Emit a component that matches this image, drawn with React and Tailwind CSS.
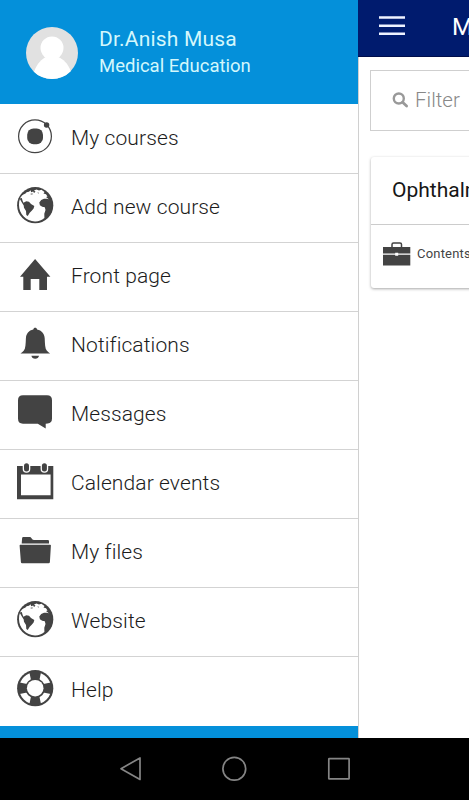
import React from 'react';

const DARK = '#434343';

function Icon({ children }) {
  return (
    <svg width="40" height="40" viewBox="0 0 40 40" fill={DARK} className="block shrink-0">
      {children}
    </svg>
  );
}

const PlanetIcon = () => (
  <Icon>
    <circle cx="20" cy="20.3" r="16.4" fill="none" stroke={DARK} strokeWidth="1.2" />
    <rect x="12.2" y="12.4" width="15.8" height="15.8" rx="6.3" />
    <circle cx="31.6" cy="9" r="2.7" />
  </Icon>
);

const GlobeIcon = () => (
  <Icon>
    <circle cx="20.2" cy="19.2" r="18.1" />
    <path
      fill="#fff"
      d="M4.2 15.5 L5.2 12 L7 9.6 L8.4 8.4 L10.5 7.6 L11.6 6.2 L14 5.8 L15.5 4.3 L16.2 6.2 L18.2 5.4 L19 7 L20.5 5.7 L19 4.5 L21.5 3.6 L24 4.6 L26.400 3.800 L29.500 6 L28.500 7.600 L31 8.200 L32.500 10.400 L31 11 L33.800 13.200 L31.500 12.800 L29 12.800 L26.200 14 L24.300 16.400 L24.900 19.300 L27.200 20.800 L29.800 21.200 L30.500 24 L29.300 27.800 L29.400 32 C26.600 34.400 23.500 35.500 20 35.400 C15.800 35.300 11.300 33.500 8.700 30.600 C5.600 27.500 4 23.200 4 19 Z"
    />
    <path d="M8.400 16.700 L11.300 15.200 L14 15.700 L16 18 L19.300 20.100 L18.600 22.400 L16.700 24.800 L14.700 26.800 L12.700 30 L11.300 29 L11 25 L9 21.700 L8.700 19.500 L6.400 15.800 L4.600 12.600 L6.800 12 L7.500 14.500Z" />
    <path d="M15 8.100l2-.6 1.300.6-1.600.4zM22.500 6.300l1.600.6-1 .7z" />
  </Icon>
);

const HomeIcon = () => (
  <Icon>
    <path d="M20.1 4 L35.4 21.8 H32 V35 H24.3 V24 H15.7 V35 H8.3 V21.8 H5 Z" />
  </Icon>
);

const BellIcon = () => (
  <Icon>
    <path d="M20.2 3.7c1 0 1.7.7 1.9 1.7 4.5.9 7.300 4.100 7.600 8.800.3 6 .2 10.100 2.200 12.600 1 1.200 2.100 2.100 3.200 2.800H5.500c1.100-.7 2.200-1.600 3.200-2.800 2-2.500 1.900-6.600 2.200-12.600.3-4.700 2.900-7.900 7.400-8.800.2-1 .9-1.700 1.900-1.700Z" />
    <path d="M16.400 31.700h7.600c-.3 1.800-1.800 3-3.800 3s-3.500-1.200-3.800-3Z" />
  </Icon>
);

const BubbleIcon = () => (
  <Icon>
    <path d="M8 2.200H32q5 0 5 5V25.500q0 4.600-4.300 5.100l-2 .2v4.700l-7.900-4.700H8q-5 0-5-5.200V7.200q0-5 5-5Z" />
  </Icon>
);

const CalendarIcon = () => (
  <Icon>
    <path fillRule="evenodd" d="M2 4H38.300V37.200H2ZM6 12.400V33.200H35.600V12.400Z" />
    <rect x="7.700" y="0" width="7.600" height="10.800" rx="3.800" fill="#fff" />
    <rect x="25.600" y="0" width="7.600" height="10.800" rx="3.800" fill="#fff" />
    <rect x="9" y="1.200" width="5" height="8.400" rx="2.500" />
    <rect x="26.900" y="1.200" width="5" height="8.400" rx="2.500" />
  </Icon>
);

const FolderIcon = () => (
  <Icon>
    <path d="M6.700 12.400 L7.100 7.200 Q7.200 6.100 8.300 6.100 H14.800 Q15.800 6.100 16.500 7.200 Q17.300 8.800 18.800 8.900 H32.800 Q34 9 34 10 V12.400Z" />
    <path d="M5.300 13.700H35.100Q36 13.700 35.900 14.600L34.900 31Q34.800 32.200 33.600 32.200H7.100Q6 32.200 5.900 31L4.600 14.600Q4.600 13.700 5.300 13.700Z" />
  </Icon>
);

const HelpIcon = () => (
  <Icon>
    <circle cx="20.200" cy="19.200" r="18.100" />
    <circle cx="20.200" cy="19.200" r="13" fill="none" stroke="#fff" strokeWidth="6" />
    <path d="M14.200 2.500H26.200L24.400 11H16ZM14.200 35.900H26.200L24.400 27.400H16ZM3.500 13.200V25.200L12 23.400V15ZM36.900 13.200V25.200L28.400 23.400V15Z" />
    <circle cx="20.200" cy="19.200" r="8.300" fill="#fff" />
  </Icon>
);

const items = [
  { label: 'My courses', icon: PlanetIcon },
  { label: 'Add new course', icon: GlobeIcon },
  { label: 'Front page', icon: HomeIcon },
  { label: 'Notifications', icon: BellIcon },
  { label: 'Messages', icon: BubbleIcon },
  { label: 'Calendar events', icon: CalendarIcon },
  { label: 'My files', icon: FolderIcon },
  { label: 'Website', icon: GlobeIcon },
  { label: 'Help', icon: HelpIcon },
];

function Drawer() {
  return (
    <aside className="flex w-[358px] shrink-0 flex-col bg-white">
      <header className="flex h-[104px] shrink-0 items-center bg-[#0490da] pl-[26px]">
        <svg width="53" height="53" viewBox="0 0 53 53" className="block">
          <clipPath id="avatar">
            <circle cx="26" cy="27" r="26" />
          </clipPath>
          <g clipPath="url(#avatar)">
            <rect width="53" height="54" fill="#e1e1e1" />
            <circle cx="26" cy="22" r="11.500" fill="#fff" />
            <path d="M8 46 C11 37 16 33 20 31 H32 C37 33 42 37 45 46 V53 H8Z" fill="#fff" />
          </g>
        </svg>
        <div className="ml-5 flex flex-col pt-px text-[#d3f7fc]">
          <div className="h-[27px] text-[21px] leading-[27px] tracking-[0.200px]">Dr.Anish Musa</div>
          <div className="h-[27px] text-[18.500px] leading-[27px]">Medical Education</div>
        </div>
      </header>
      <nav className="flex flex-col">
        {items.map(({ label, icon: ItemIcon }, i) => (
          <div
            key={label}
            className="flex h-[69px] items-start border-b border-[#d3d3d3] pt-3 pl-[15px] first:h-[70px] last:border-b-0"
          >
            <ItemIcon />
            <span className={`ml-4 text-[21px] leading-[28px] font-light tracking-[0.100px] text-[#1c1c1c] ${i === 0 ? 'pt-[8px]' : 'pt-[7px]'}`}>
              {label}
            </span>
          </div>
        ))}
      </nav>
      <div className="h-3 bg-[#0490da]" />
    </aside>
  );
}

function CoursePage() {
  return (
    <main className="flex w-[361px] shrink-0 flex-col bg-white">
      <header className="flex h-[57px] shrink-0 items-center border-b border-[#000d4a] bg-[#001b6e] pl-[21px]">
        <svg width="26" height="20" viewBox="0 0 26 20" className="mb-[4px] block">
          <path d="M0 1.500H26M0 9.800H26M0 17.700H26" stroke="#eef2ff" strokeWidth="2.500" />
        </svg>
        <span className="mb-[2px] ml-[47px] text-[24px] leading-[30px] text-white">My courses</span>
      </header>
      <div className="grow border-l border-[#d0d0d0]">
        <div className="mt-[13px] ml-[11px] flex h-[61px] w-[338px] items-center border border-[#cfcfcf] pl-[21px]">
          <svg width="17" height="17" viewBox="0 0 17 17" fill="none" stroke="#999" className="mb-px block">
            <circle cx="6.800" cy="6.500" r="5" strokeWidth="2.400" />
            <path d="M10.600 10.200L14.600 14" strokeWidth="2.800" strokeLinecap="round" />
          </svg>
          <span className="ml-[6px] text-[20.500px] font-light text-[#888]">Filter</span>
        </div>
        <section className="mt-[26px] ml-3 w-[338px] rounded-[3px] bg-white shadow-[0_1px_3px_rgba(0,0,0,0.35)]">
          <div className="flex h-[68px] items-center border-b border-[#ccc] pl-[21px] text-[21px] text-[#161616]">
            Ophthalmology
          </div>
          <div className="flex h-[63px] items-center pl-3">
            <svg width="28" height="26" viewBox="0 0 28 26" fill={DARK} className="mb-[6px] block">
              <path d="M9 6V3.500Q9 2 10.500 2H17Q18.500 2 18.500 3.500V6" fill="none" stroke={DARK} strokeWidth="1.500" />
              <path d="M0 6H27.300V12.500H15.200V11.800H12.200V12.500H0ZM0 13.800H12.200V14.800H15.200V13.800H27.300V24.500H0Z" />
            </svg>
            <span className="mb-[5px] ml-[6px] text-[13px] tracking-[0.200px] text-[#444]">Contents</span>
          </div>
        </section>
      </div>
    </main>
  );
}

function SystemBar() {
  return (
    <footer className="flex h-[62px] shrink-0 items-center bg-black pl-[118px]">
      <svg width="234" height="28" viewBox="0 0 234 28" fill="none" stroke="#858585" strokeWidth="1.700" strokeLinejoin="round" className="block">
        <path d="M3 13.700L22 2.900V24.500Z" />
        <circle cx="116.300" cy="13.800" r="11.400" />
        <rect x="210.800" y="3.600" width="20.300" height="20.300" rx="0.500" />
      </svg>
    </footer>
  );
}

export default function App() {
  return (
    <div className="flex h-[800px] w-[469px] flex-col overflow-hidden bg-white font-['Roboto',sans-serif]">
      <div className="flex h-[738px] shrink-0 overflow-hidden">
        <Drawer />
        <CoursePage />
      </div>
      <SystemBar />
    </div>
  );
}
